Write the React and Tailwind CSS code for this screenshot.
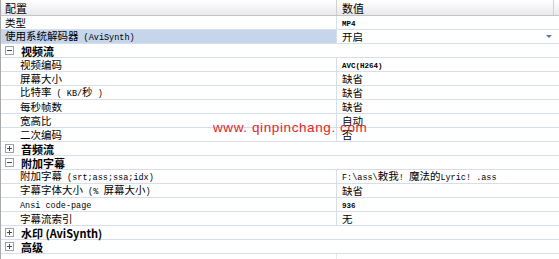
const rows = [
  { type: 'item', label: '类型', value: 'MP4', level: 0, narrow: true },
  { type: 'item', label: '使用系统解码器 (AviSynth)', value: '开启', level: 0, selected: true, dropdown: true },
  { type: 'group', label: '视频流', open: true },
  { type: 'item', label: '视频编码', value: 'AVC(H264)', level: 1, narrow: true },
  { type: 'item', label: '屏幕大小', value: '缺省', level: 1 },
  { type: 'item', label: '比特率 ( KB/秒 )', value: '缺省', level: 1 },
  { type: 'item', label: '每秒帧数', value: '缺省', level: 1 },
  { type: 'item', label: '宽高比', value: '自动', level: 1 },
  { type: 'item', label: '二次编码', value: '否', level: 1 },
  { type: 'group', label: '音频流', open: false },
  { type: 'group', label: '附加字幕', open: true },
  { type: 'item', label: '附加字幕 (srt;ass;ssa;idx)', value: 'F:\\ass\\敕我! 魔法的Lyric! .ass', level: 1 },
  { type: 'item', label: '字幕字体大小 (% 屏幕大小)', value: '缺省', level: 1 },
  { type: 'item', label: 'Ansi code-page', value: '936', level: 1, narrow: true },
  { type: 'item', label: '字幕流索引', value: '无', level: 1 },
  { type: 'group', label: '水印 (AviSynth)', open: false },
  { type: 'group', label: '高级', open: false },
];

// latin runs get a narrow monospace face, like the half-width glyphs of the original
function Txt({ text, latin = 'text-[8.5px]' }) {
  const parts = text.match(/[\x20-\x7e]+|[^\x20-\x7e]+/g) || [];
  return (
    <span className="whitespace-pre leading-[12px]">
      {parts.map((p, i) =>
        /^[\x20-\x7e]+$/.test(p) ? (
          <span key={i} className={latin} style={{ fontFamily: '"Liberation Mono", monospace' }}>{p}</span>
        ) : (
          <span key={i}>{p}</span>
        )
      )}
    </span>
  );
}

function ToggleBox({ open }) {
  return (
    <span className="w-[9px] h-[9px] border border-[#9aa3ad] bg-white flex items-center justify-center relative shrink-0">
      <span className="absolute w-[5px] h-px bg-[#4a4a4a]" />
      {!open && <span className="absolute h-[5px] w-px bg-[#4a4a4a]" />}
    </span>
  );
}

export default function App() {
  const font = { fontFamily: '"Noto Sans CJK SC", "Liberation Sans", sans-serif' };
  return (
    <div className="w-[559px] h-[259px] bg-white relative overflow-hidden border-l border-[#a9a9a9] text-[10.5px] text-black" style={font}>
      <div className="h-[16px] flex border-b border-[#c4c4c4] bg-gradient-to-b from-[#ffffff] to-[#e9e9ec] text-[11px]">
        <div className="w-[336px] pl-[4px] flex items-center border-r border-[#d0d0d0] leading-[12px]">配置</div>
        <div className="w-[217px] pl-[5px] flex items-center border-r border-[#d0d0d0] leading-[12px]">数值</div>
        <div className="flex-1" />
      </div>
      {rows.map((r, i) =>
        r.type === 'group' ? (
          <div key={i} className="h-[14px] flex items-center border-b border-[#d7deea] pl-[4px] gap-[7px]">
            <ToggleBox open={r.open} />
            <span className="font-bold leading-[12px] text-[11px]">{r.label}</span>
          </div>
        ) : (
          <div key={i} className="h-[14px] flex border-b border-[#d7deea]">
            <div
              className={
                'w-[336px] flex items-center border-r border-[#d7deea] ' +
                (r.level ? 'pl-[19px] ' : 'pl-[4px] ') +
                (r.selected ? 'bg-[#c4d5ec]' : '')
              }
            >
              <Txt text={r.label} />
            </div>
            <div className="flex-1 flex items-center pl-[5px] pr-[6px]">
              <Txt text={r.value} latin={r.narrow ? 'text-[7.5px] font-bold' : 'text-[8.5px]'} />
              {r.dropdown && (
                <span className="ml-auto w-[8px] h-[8px] flex items-center justify-center">
                  <span className="w-0 h-0 border-l-[3px] border-r-[3px] border-t-[3px] border-l-transparent border-r-transparent border-t-[#5a7aa5]" />
                </span>
              )}
            </div>
          </div>
        )
      )}
      <div className="flex h-full">
        <div className="w-[336px] border-r border-[#e6eaf0]" />
      </div>
      <div
        className="absolute left-[212px] top-[121px] text-[13.5px] text-[#e0242a] tracking-[0.6px] leading-[14px]"
        style={{ fontFamily: '"Liberation Sans", sans-serif' }}
      >
        www. qinpinchang. com
      </div>
    </div>
  );
}
